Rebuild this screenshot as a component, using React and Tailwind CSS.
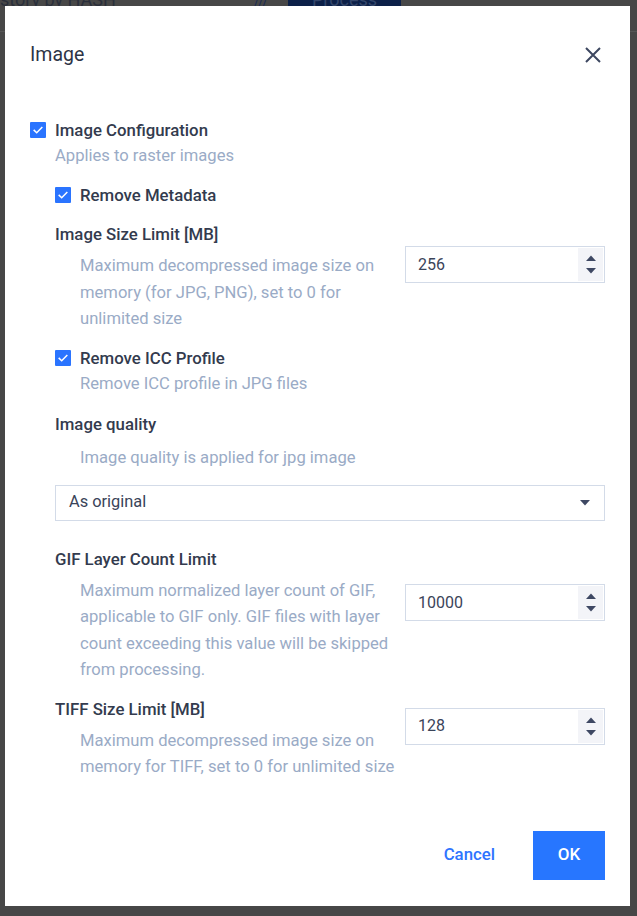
import React from "react";

function Check() {
  return (
    <span className="flex h-[16px] w-[16px] shrink-0 items-center justify-center rounded-[1px] bg-[#2a74ff]">
      <svg viewBox="0 0 16 16" className="h-[16px] w-[16px]">
        <path d="M4.2 8.4l2.5 2.4L11.8 5.6" fill="none" stroke="white" strokeWidth="1.5" strokeLinecap="square" />
      </svg>
    </span>
  );
}

function NumberInput({ value }) {
  return (
    <div className="flex h-[37px] w-[200px] border border-[#d3dbe8] bg-white">
      <div className="flex flex-1 items-center pl-[12px] text-[16px] text-[#3a4459]">{value}</div>
      <div className="my-[1px] mr-[1px] flex w-[25px] flex-col items-center justify-center gap-[7px] bg-[#f3f4f8]">
        <svg viewBox="0 0 10 6" className="h-[6px] w-[10px]">
          <path d="M0 6L5 0.5L10 6Z" fill="#3e4863" />
        </svg>
        <svg viewBox="0 0 10 6" className="h-[6px] w-[10px]">
          <path d="M0 0L5 5.5L10 0Z" fill="#3e4863" />
        </svg>
      </div>
    </div>
  );
}

function InputRow({ label, lines, value, className }) {
  return (
    <div className={"flex items-center " + className}>
      <div className="flex-1">
        <div className="text-[16.8px] font-medium leading-[26px] text-[#333b4e]">{label}</div>
        <div className="mt-[6px] pl-[25px] text-[16.6px] leading-[26.5px] text-[#9aabc6]">
          {lines.map((l, i) => (
            <div key={i} className="whitespace-nowrap">{l}</div>
          ))}
        </div>
      </div>
      <div className="pb-[24px]">
        <NumberInput value={value} />
      </div>
    </div>
  );
}

export default function App() {
  return (
    <div className="relative h-[916px] w-[637px] overflow-hidden bg-[#474747] font-[family-name:Roboto,sans-serif]">
      {/* dimmed page behind the dialog */}
      <div className="flex h-[32px] items-start border-b border-[#565656]">
        <div className="-mt-[11px] w-[240px] text-[18px] leading-[22px] text-[#2a2f3b]">story by HASH</div>
        <div className="-mt-[4px] ml-[14px] w-[30px] text-[14px] leading-[10px] text-[#1c2c52]">///</div>
        <div className="-mt-[10px] ml-[4px] flex h-[16px] w-[113px] items-start justify-center bg-[#0c2048] text-[18px] leading-[20px] text-[#34466a]">Process</div>
      </div>

      {/* dialog */}
      <div className="absolute left-[5px] top-[6px] flex h-[900px] w-[625px] flex-col bg-white px-[25px]">
        <div className="flex items-center justify-between pt-[37px]">
          <div className="text-[19.5px] leading-[24px] text-[#2d3446]">Image</div>
          <svg viewBox="0 0 16 16" className="mr-[4px] h-[16px] w-[16px]">
            <path d="M1 1L15 15M15 1L1 15" stroke="#3d4760" strokeWidth="2" fill="none" />
          </svg>
        </div>

        <div className="mt-[50px] flex items-center gap-[9px]">
          <Check />
          <div className="text-[16.8px] font-medium leading-[26px] text-[#333b4e]">Image Configuration</div>
        </div>

        <div className="pl-[25px]">
          <div className="text-[16.6px] leading-[26px] text-[#9aabc6]">Applies to raster images</div>

          <div className="mt-[13px] flex items-center gap-[9px]">
            <Check />
            <div className="text-[16.8px] font-medium leading-[26px] text-[#333b4e]">Remove Metadata</div>
          </div>

          <InputRow
            className="mt-[13px]"
            label="Image Size Limit [MB]"
            lines={["Maximum decompressed image size on", "memory (for JPG, PNG), set to 0 for", "unlimited size"]}
            value="256"
          />

          <div className="mt-[12px] flex items-center gap-[9px]">
            <Check />
            <div className="text-[16.8px] font-medium leading-[26px] text-[#333b4e]">Remove ICC Profile</div>
          </div>
          <div className="pl-[25px] text-[16.6px] leading-[26px] text-[#9aabc6]">Remove ICC profile in JPG files</div>

          <div className="mt-[14px] text-[16.8px] font-medium leading-[26px] text-[#333b4e]">Image quality</div>
          <div className="mt-[8px] pl-[25px] text-[16.6px] leading-[26px] text-[#9aabc6]">Image quality is applied for jpg image</div>

          <div className="mt-[14px] flex h-[36px] items-center justify-between border border-[#d3dbe8] pl-[13px] pr-[14px]">
            <span className="text-[16.4px] text-[#3a4459]">As original</span>
            <svg viewBox="0 0 10 6" className="h-[6px] w-[10px]">
              <path d="M0 0L5 5.5L10 0Z" fill="#3e4863" />
            </svg>
          </div>

          <InputRow
            className="mt-[25px]"
            label="GIF Layer Count Limit"
            lines={[
              "Maximum normalized layer count of GIF,",
              "applicable to GIF only. GIF files with layer",
              "count exceeding this value will be skipped",
              "from processing.",
            ]}
            value="10000"
          />

          <InputRow
            className="mt-[12px]"
            label="TIFF Size Limit [MB]"
            lines={["Maximum decompressed image size on", "memory for TIFF, set to 0 for unlimited size"]}
            value="128"
          />
        </div>

        <div className="mt-[50px] flex items-center justify-end gap-[38px]">
          <button className="text-[16.8px] font-medium text-[#2e74ff]">Cancel</button>
          <button className="flex h-[49px] w-[72px] items-center justify-center bg-[#2776ff] text-[17px] font-medium text-white">
            OK
          </button>
        </div>
      </div>
    </div>
  );
}
